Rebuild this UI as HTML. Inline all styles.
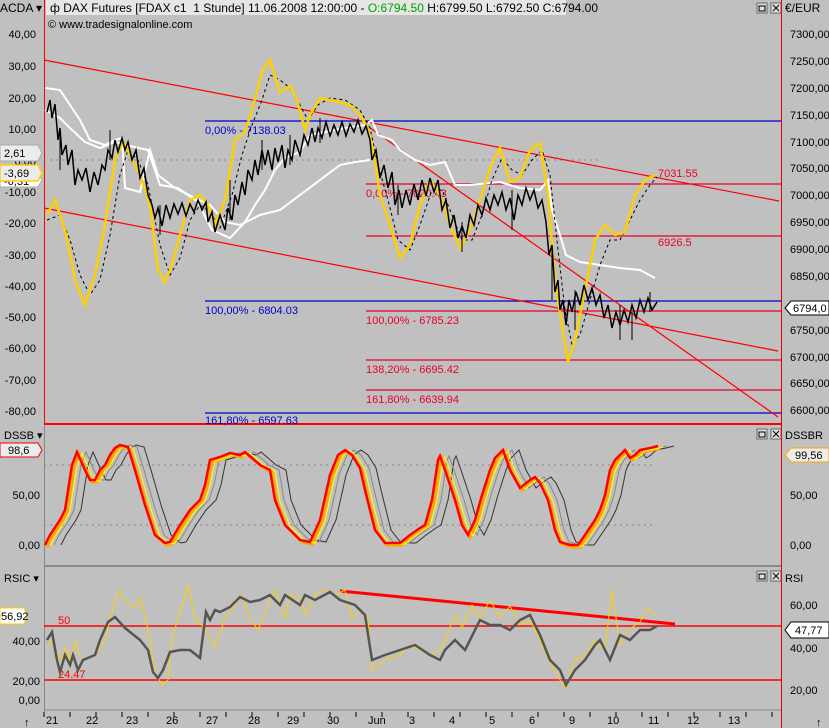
<!DOCTYPE html>
<html><head><meta charset="utf-8"><style>
html,body{margin:0;padding:0;background:#c0c0c0;}
svg{display:block;font-family:"Liberation Sans",sans-serif;}
</style></head><body>
<svg width="829" height="728" viewBox="0 0 829 728" xmlns="http://www.w3.org/2000/svg">
<rect width="829" height="728" fill="#c0c0c0"/>
<rect x="46" y="0" width="520" height="15" fill="#e6e6e6"/>
<text x="50" y="12" font-size="12" fill="#000">ф DAX Futures [FDAX c1&#160;&#160;1 Stunde] 11.06.2008 12:00:00 - <tspan fill="#00a000">O:6794.50</tspan> H:6799.50 L:6792.50 C:6794.00</text>
<text x="48" y="28" font-size="11" fill="#000">© www.tradesignalonline.com</text>
<text x="0" y="12" font-size="12" fill="#000">ACDA ▾</text>
<g stroke="#666" fill="#ddd"><rect x="757" y="3" width="10" height="10"/><rect x="771" y="3" width="10" height="10"/></g>
<rect x="759" y="6" width="6" height="5" fill="none" stroke="#000"/>
<path d="M773 5l6 6M779 5l-6 6" stroke="#000"/>
<g stroke="#666" fill="#ddd"><rect x="757" y="429" width="10" height="10"/><rect x="771" y="429" width="10" height="10"/><rect x="757" y="571" width="10" height="10"/><rect x="771" y="571" width="10" height="10"/></g>
<rect x="759" y="432" width="6" height="5" fill="none" stroke="#000"/><path d="M773 431l6 6M779 431l-6 6" stroke="#000"/>
<rect x="759" y="574" width="6" height="5" fill="none" stroke="#000"/><path d="M773 573l6 6M779 573l-6 6" stroke="#000"/>

<line x1="44.5" y1="0" x2="44.5" y2="424" stroke="#f00"/>
<line x1="44.5" y1="424" x2="44.5" y2="712" stroke="#888"/>
<line x1="781.5" y1="0" x2="781.5" y2="728" stroke="#e00"/>
<line x1="44" y1="424" x2="781" y2="424" stroke="#f00" stroke-width="2"/>
<line x1="44" y1="566" x2="781" y2="566" stroke="#888" stroke-width="2"/>
<line x1="44" y1="710" x2="781" y2="710" stroke="#888"/>

<line x1="44" y1="160" x2="600" y2="160" stroke="#888" stroke-dasharray="2,4"/>
<line x1="205" y1="121" x2="781" y2="121" stroke="#0000c8" stroke-width="1.2"/>
<line x1="205" y1="301" x2="781" y2="301" stroke="#0000c8" stroke-width="1.2"/>
<line x1="205" y1="413" x2="781" y2="413" stroke="#0000c8" stroke-width="1.2"/>
<g stroke="#e8002a" stroke-width="1.2">
<line x1="366" y1="184" x2="781" y2="184"/>
<line x1="366" y1="236" x2="781" y2="236"/>
<line x1="366" y1="311" x2="781" y2="311"/>
<line x1="366" y1="360" x2="781" y2="360"/>
<line x1="366" y1="390" x2="781" y2="390"/>
</g>
<g stroke="#f00" stroke-width="1.2">
<line x1="44" y1="60" x2="779" y2="201"/>
<line x1="44" y1="208" x2="778" y2="351"/>
<line x1="366" y1="125" x2="778" y2="417"/>
</g>
<g font-size="11">
<text x="205" y="134" fill="#0000c8">0,00% - 7138.03</text>
<text x="205" y="314" fill="#0000c8">100,00% - 6804.03</text>
<text x="205" y="424" fill="#0000c8">161,80% - 6597.63</text>
<text x="366" y="197" fill="#e8002a">0,00% - 7020.43</text>
<text x="366" y="324" fill="#e8002a">100,00% - 6785.23</text>
<text x="366" y="373" fill="#e8002a">138,20% - 6695.42</text>
<text x="366" y="403" fill="#e8002a">161,80% - 6639.94</text>
<text x="658" y="177" fill="#e8002a">7031.55</text>
<text x="658" y="246" fill="#e8002a">6926.5</text>
</g>

<polyline fill="none" stroke="#fff" stroke-width="2" points="45,88 60,90 70,105 80,120 90,140 105,145 115,140 122,138 125,188 140,192 150,150 158,175 175,188 195,198 210,205 225,222 240,225 260,215 280,210 300,195 320,180 340,165 355,162 370,160"/>
<polyline fill="none" stroke="#fff" stroke-width="2" points="45,110 60,118 72,130 85,142 100,148 115,142 130,146 148,150 160,185 178,188 198,202 212,230 230,238 245,222 255,205 265,190 275,170 285,158 300,152 310,135 325,132 345,128 365,125 372,120 378,135 392,140 400,150 415,160 430,165 445,162 455,185 470,185 500,182 520,188 540,190 548,180 552,210 560,235 566,255 580,262 600,265 620,268 640,270 655,278"/>

<polyline fill="none" stroke="#000" stroke-dasharray="3,3" points="47,220 60,215 70,240 80,275 90,295 100,280 110,235 120,175 128,150 138,160 148,185 160,245 170,275 180,258 190,220 200,205 210,212 220,228 232,195 242,155 252,125 262,100 270,75 280,80 290,88 300,105 308,120 318,105 330,98 345,100 360,110 370,128 378,165 388,200 398,240 410,250 420,225 432,190 442,190 452,215 462,240 472,240 482,215 492,180 502,158 512,170 522,175 532,160 542,150 550,175 558,250 565,310 572,345 580,335 590,300 600,265 610,240 620,240 630,220 640,200 650,185 657,177"/>
<polyline fill="none" stroke="#ffd000" stroke-width="2.5" points="47,215 55,200 65,230 75,280 85,305 95,275 105,225 115,160 123,142 130,155 140,175 150,205 158,270 165,282 172,265 180,235 190,200 200,195 208,205 215,225 225,200 235,140 245,132 252,110 262,72 270,60 280,92 290,86 297,100 305,130 310,115 320,98 330,100 340,102 350,105 360,115 368,128 373,150 380,195 390,225 400,258 410,245 420,205 430,180 440,195 450,225 460,248 470,230 480,200 490,168 500,148 510,182 520,178 530,150 540,143 548,195 555,280 562,325 568,362 575,340 585,290 595,240 605,225 615,235 625,232 635,195 645,180 655,175"/>
<polyline fill="none" stroke="#000" stroke-width="1.5" points="47,112 50,100 52,118 55,104 58,140 60,128 62,155 66,145 68,165 72,150 75,185 78,170 82,180 86,168 90,192 94,172 98,185 102,165 105,170 108,150 112,158 115,140 118,152 122,138 125,150 128,142 132,160 136,150 140,178 144,168 148,195 152,205 155,218 158,208 162,226 166,205 170,218 174,204 178,214 182,203 186,216 190,204 194,212 198,200 202,210 206,202 208,222 212,212 215,232 220,215 225,230 228,208 232,220 235,195 238,205 242,182 245,195 248,170 252,180 255,160 258,175 262,150 265,165 268,150 272,170 275,148 278,162 282,145 285,168 288,150 292,160 295,140 300,155 304,135 308,145 312,128 315,142 318,128 322,138 326,122 330,136 334,125 338,135 342,122 346,136 350,124 354,132 358,120 362,134 366,126 370,140 372,160 376,150 380,178 384,165 388,188 392,172 395,205 399,190 402,208 406,190 410,205 414,184 418,200 422,180 426,196 430,178 434,192 438,180 442,210 446,200 450,228 454,215 458,238 462,226 466,238 470,215 474,225 478,205 482,215 486,198 490,210 494,195 498,205 502,192 506,210 510,198 514,220 518,195 522,205 526,188 530,200 534,190 538,208 542,200 546,222 549,255 552,245 555,292 558,280 560,310 563,300 566,325 569,300 572,312 576,292 580,305 584,285 588,300 592,288 596,305 600,295 604,318 608,305 612,328 616,312 620,325 624,310 628,322 632,305 636,318 640,300 644,312 648,298 652,310 657,302"/>
<g stroke="#000" stroke-width="1">
<path d="M60 130v40M110 130v30M160 205v30M230 180v40M262 140v30M290 135v30M320 118v25M398 185v30M462 222v30M512 190v40M552 250v50M575 290v40M620 305v35M632 312v28M650 292v20"/>
</g>
<path d="M785 308l6-7h38v14h-38z" fill="#fff" stroke="#000"/>
<text x="793" y="312" font-size="11">6794,0</text>

<g font-size="11" text-anchor="end" fill="#000">
<text x="36" y="38">40,00</text><text x="36" y="70">30,00</text><text x="36" y="102">20,00</text>
<text x="36" y="133">10,00</text><text x="36" y="165">0,00</text><text x="36" y="196">-10,00</text>
<text x="36" y="227">-20,00</text><text x="36" y="259">-30,00</text><text x="36" y="290">-40,00</text>
<text x="36" y="321">-50,00</text><text x="36" y="352">-60,00</text><text x="36" y="384">-70,00</text>
<text x="36" y="415">-80,00</text>
</g>
<path d="M0 145h38l4 8-4 8h-38z" fill="#ececec" stroke="#aaa"/><text x="4" y="157" font-size="11">2,61</text>
<path d="M0 173h38l4 7-4 7h-38z" fill="#fff" stroke="#aaa"/><text x="4" y="185" font-size="11">-6,31</text>
<path d="M0 165h38l4 8-4 8h-38z" fill="#ececec" stroke="#ffd000" stroke-width="1.5"/><text x="4" y="177" font-size="11">-3,69</text>
<text x="785" y="12" font-size="12">€/EUR</text>
<g font-size="11" fill="#000">
<text x="790" y="38">7300,00</text><text x="790" y="65">7250,00</text><text x="790" y="92">7200,00</text>
<text x="790" y="119">7150,00</text><text x="790" y="146">7100,00</text><text x="790" y="172">7050,00</text>
<text x="790" y="199">7000,00</text><text x="790" y="226">6950,00</text><text x="790" y="253">6900,00</text>
<text x="790" y="280">6850,00</text><text x="790" y="334">6750,00</text><text x="790" y="361">6700,00</text>
<text x="790" y="387">6650,00</text><text x="790" y="414">6600,00</text>
</g>

<text x="4" y="439" font-size="11">DSSB ▾</text>
<path d="M0 443h38l4 7-4 7h-38z" fill="#ececec" stroke="#e00"/><text x="8" y="454" font-size="11">98,6</text>
<text x="785" y="439" font-size="11">DSSBR</text>
<path d="M785 455l6-7h38v14h-38z" fill="#ececec" stroke="#ffa500"/><text x="795" y="459" font-size="11">99,56</text>
<g font-size="11" text-anchor="end"><text x="40" y="499">50,00</text><text x="40" y="549">0,00</text></g>
<g font-size="11"><text x="790" y="499">50,00</text><text x="790" y="549">0,00</text></g>
<line x1="44" y1="465" x2="656" y2="465" stroke="#888" stroke-dasharray="2,4"/>
<line x1="44" y1="525" x2="656" y2="525" stroke="#888" stroke-dasharray="2,4"/>
<defs><polyline id="ds" fill="none" points="45,545 50,535 60,520 65,510 72,465 77,452 85,470 90,480 95,480 100,470 105,465 110,455 115,448 120,445 128,447 135,470 145,505 155,535 165,543 170,542 180,525 190,510 200,500 205,485 210,460 220,457 230,453 240,455 245,452 252,458 260,465 270,470 275,500 285,525 292,532 300,540 310,542 320,520 330,475 338,455 345,450 352,455 360,468 365,490 375,530 385,543 400,543 410,535 420,528 425,525 432,500 438,460 440,456 445,470 455,500 462,525 468,535 475,520 482,495 490,470 495,458 503,450 510,470 520,488 530,480 535,477 540,483 548,500 555,530 560,542 570,545 578,545 585,535 595,520 600,510 605,495 610,470 615,460 620,455 625,450 630,458 635,455 640,450 650,448 658,446"/></defs>
<use href="#ds" stroke="#333" stroke-width="1" transform="translate(16,0)"/>
<use href="#ds" stroke="#888" stroke-width="1" transform="translate(9,0)"/>
<use href="#ds" stroke="#ffa500" stroke-width="3" transform="translate(2,2)"/>
<use href="#ds" stroke="#ffff00" stroke-width="1" transform="translate(5,1)"/>
<use href="#ds" stroke="#f00" stroke-width="2.5"/>

<text x="4" y="582" font-size="11">RSIC ▾</text>
<text x="785" y="582" font-size="11">RSI</text>
<path d="M0 608h24l3 8-3 8h-24z" fill="#fff" stroke="#ffd000"/><text x="1" y="620" font-size="11">56,92</text>
<path d="M785 630l6-8h38v16h-38z" fill="#fff" stroke="#000"/><text x="795" y="634" font-size="11">47,77</text>
<g font-size="11" text-anchor="end"><text x="40" y="645">40,00</text><text x="40" y="685">20,00</text><text x="40" y="704">0,00</text></g>
<g font-size="11"><text x="790" y="609">60,00</text><text x="790" y="652">40,00</text><text x="790" y="694">20,00</text></g>
<line x1="44" y1="626" x2="781" y2="626" stroke="#f00" stroke-width="1.5"/>
<line x1="44" y1="680" x2="781" y2="680" stroke="#f00" stroke-width="1.5"/>
<text x="58" y="624" font-size="11" fill="#f00">50</text>
<text x="58" y="678" font-size="11" fill="#f00">24.47</text>
<line x1="340" y1="591" x2="675" y2="624" stroke="#f00" stroke-width="3"/>
<polyline fill="none" stroke="#ffd000" stroke-width="1" points="47,648 52,640 57,652 62,663 65,648 70,660 75,642 80,655 85,660 95,655 105,640 112,612 118,590 125,600 135,608 140,598 145,615 150,640 155,672 162,685 168,680 172,640 178,618 188,585 195,620 205,628 215,648 225,618 235,605 242,595 250,618 258,630 265,612 275,590 285,618 290,595 300,598 305,615 315,595 325,590 335,595 345,590 352,618 360,610 368,618 372,670 385,660 400,655 410,645 420,650 430,655 440,650 445,640 455,615 462,628 472,605 480,618 490,600 500,618 510,606 520,625 530,620 540,640 550,662 560,680 566,688 575,660 585,655 595,640 605,650 612,590 620,645 628,630 640,622 648,608 656,615"/>
<polyline fill="none" stroke="#555" stroke-width="2.5" points="47,640 52,632 57,660 60,672 65,655 70,665 73,655 78,670 83,660 95,655 100,640 108,622 115,617 125,628 140,640 148,650 153,672 158,678 163,670 170,652 180,650 190,650 200,658 206,612 210,620 215,610 220,612 230,607 240,597 250,602 260,600 270,595 280,605 285,595 300,605 305,595 315,600 330,592 340,600 355,605 365,615 372,660 385,655 400,650 415,645 430,655 440,660 445,650 455,640 465,650 475,630 480,620 490,625 500,625 510,630 520,620 530,615 540,635 550,660 560,670 566,685 575,670 585,660 595,645 600,640 610,660 620,635 630,640 640,630 650,630 657,626"/>

<g stroke="#000"><path d="M44 712v5M70 712v5M96 712v5M122 712v5M148 712v5M174 712v5M200 712v5M226 712v5M252 712v5M278 712v5M304 712v5M330 712v5M356 712v5M382 712v5M408 712v5M434 712v5M460 712v5M486 712v5M512 712v5M538 712v5M564 712v5M590 712v5M616 712v5M642 712v5M668 712v5M694 712v5M720 712v5M746 712v5M772 712v5"/></g>
<g font-size="11" fill="#000">
<text x="46" y="724">21</text><text x="86" y="724">22</text><text x="126" y="724">23</text><text x="166" y="724">26</text>
<text x="206" y="724">27</text><text x="248" y="724">28</text><text x="287" y="724">29</text><text x="327" y="724">30</text>
<text x="368" y="724">Jun</text><text x="409" y="724">3</text><text x="449" y="724">4</text><text x="489" y="724">5</text>
<text x="529" y="724">6</text><text x="569" y="724">9</text><text x="607" y="724">10</text><text x="648" y="724">11</text>
<text x="687" y="724">12</text><text x="728" y="724">13</text>
<text x="24" y="726">↑</text><text x="816" y="726">↑</text>
</g>
</svg>
</body></html>
